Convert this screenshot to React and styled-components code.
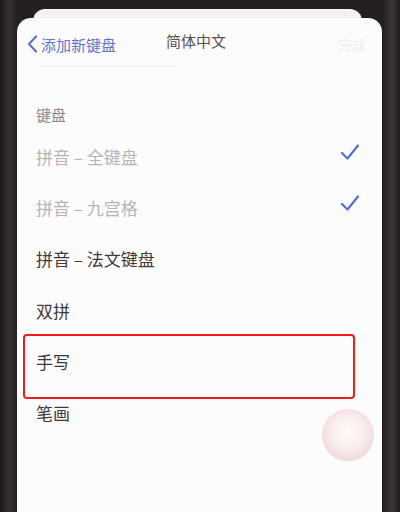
import styled, { createGlobalStyle } from "styled-components";

const Global = createGlobalStyle`
  html, body {
    margin: 0;
    padding: 0;
    background: #2b2329;
  }
  body {
    font-family: "Noto Sans CJK SC", "Noto Sans", sans-serif;
  }
`;

const Frame = styled.div`
  width: 400px;
  height: 512px;
  overflow: hidden;
  background: linear-gradient(90deg, #1f191d 0px, #3a3137 10px, #251e23 17px, #251e23 383px, #3e353b 392px, #1e181c 400px);
  padding-top: 9px;
  box-sizing: border-box;
`;

const BackSheet = styled.div`
  margin: 0 38px 0 33px;
  height: 14px;
  background: #f4f1f2;
  border-radius: 12px 12px 0 0;
`;

const Screen = styled.div`
  margin: -5px 18px 0 17px;
  height: 520px;
  background: #fdfcfc;
  border-radius: 14px 14px 0 0;
  position: relative;
`;

const NavBar = styled.div`
  display: flex;
  align-items: center;
  height: 44px;
  padding: 4px 10px 0 10px;
  position: relative;
`;

const Back = styled.div`
  display: flex;
  align-items: center;
  gap: 3px;
  color: #6274cf;
  font-size: 15px;
`;

const Title = styled.div`
  position: absolute;
  left: 149px;
  top: 12px;
  font-size: 15px;
  color: #585256;
`;

const Done = styled.div`
  margin-left: auto;
  margin-right: 6px;
  font-size: 14px;
  color: #f0eeef;
`;

const Divider = styled.div`
  margin: 0 0 0 22px;
  width: 140px;
  height: 1px;
  background: #f1eff0;
`;

const SectionHead = styled.div`
  padding: 37px 0 0 19px;
  font-size: 15px;
  color: #8e888c;
  height: 26px;
`;

const List = styled.div`
  display: flex;
  flex-direction: column;
  margin-top: 1px;
`;

const Row = styled.div`
  height: 51.2px;
  display: flex;
  align-items: center;
  padding: 0 22px 0 19px;
  font-size: 17px;
  color: ${(p) => (p.$dim ? "#bab2b6" : "#3e393c")};
  position: relative;
`;

const Check = styled.svg`
  margin-left: auto;
  width: 20px;
  height: 18px;
  transform: translateY(-5px);
`;

const Highlight = styled.div`
  position: absolute;
  left: 6px;
  top: -1.5px;
  width: 328px;
  height: 61px;
  border: 2.5px solid #ef1c1c;
  border-radius: 4px;
`;

const Bubble = styled.div`
  position: absolute;
  left: 305px;
  top: 391px;
  width: 52px;
  height: 52px;
  border-radius: 50%;
  background: radial-gradient(circle at 50% 45%, #fffafa 0%, #fbeeee 40%, #efd6d8 78%, #f3e4e6 100%);
  filter: blur(0.6px);
`;

const CheckMark = () => (
  <Check viewBox="0 0 20 18">
    <path d="M2 10 L7.5 15.5 L18 2.5" fill="none" stroke="#5a6ed0" strokeWidth="2.2" strokeLinecap="round" strokeLinejoin="round" />
  </Check>
);

const rows = [
  { label: "拼音 – 全键盘", dim: true, checked: true },
  { label: "拼音 – 九宫格", dim: true, checked: true },
  { label: "拼音 – 法文键盘" },
  { label: "双拼" },
  { label: "手写", mark: true },
  { label: "笔画" },
];

export default function App() {
  return (
    <>
      <Global />
      <Frame>
        <BackSheet />
        <Screen>
          <NavBar>
            <Back>
              <svg width="11" height="18" viewBox="0 0 11 18">
                <path d="M9 1.5 L2 9 L9 16.5" fill="none" stroke="#6274cf" strokeWidth="2.3" strokeLinecap="round" strokeLinejoin="round" />
              </svg>
              添加新键盘
            </Back>
            <Title>简体中文</Title>
            <Done>完成</Done>
          </NavBar>
          <Divider />
          <SectionHead>键盘</SectionHead>
          <List>
            {rows.map((r) => (
              <Row key={r.label} $dim={r.dim}>
                {r.label}
                {r.checked && <CheckMark />}
                {r.mark && <Highlight />}
              </Row>
            ))}
          </List>
          <Bubble />
        </Screen>
      </Frame>
    </>
  );
}
